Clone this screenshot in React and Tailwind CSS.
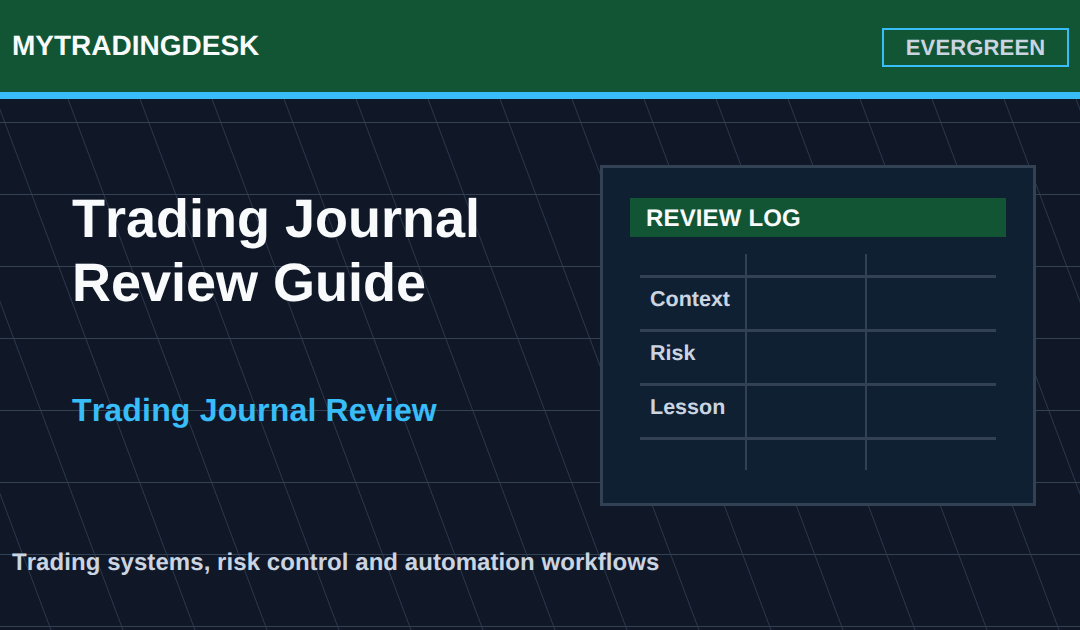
const rows = ['Context', 'Risk', 'Lesson'];

const GridLines = () => {
  const horizontals = [122, 194, 266, 338, 410, 482, 554, 626];
  const diagonals = [];
  for (let x = -220; x < 1152; x += 72) diagonals.push(x);
  return (
    <svg className="absolute inset-0" width="1080" height="630" viewBox="0 0 1080 630">
      {horizontals.map((y) => (
        <line key={y} x1="0" x2="1080" y1={y + 0.5} y2={y + 0.5} stroke="#334155" strokeWidth="1" />
      ))}
      {diagonals.map((x) => (
        <line key={x} x1={x} y1="99" x2={x + 199} y2="630" stroke="#334155" strokeWidth="0.8" />
      ))}
    </svg>
  );
};

export default function App() {
  return (
    <div className="relative w-[1080px] h-[630px] overflow-hidden bg-[#101828] font-['Liberation_Sans',Arial,sans-serif] [text-rendering:geometricPrecision] [font-kerning:none]">
      <GridLines />

      {/* Header */}
      <header className="relative h-[99px] bg-[#115535] border-b-[7px] border-[#38bdf8] flex items-center justify-between pl-3 pr-[11px]">
        <div className="text-[28px] leading-8 font-bold text-[#f8fafc]">MYTRADINGDESK</div>
        <div className="w-[187px] h-[39px] mt-[2px] border-2 border-[#38bdf8] flex items-center justify-center text-[22px] tracking-[0.15px] font-bold text-[#cbd5e1]">
          EVERGREEN
        </div>
      </header>

      {/* Main */}
      <main className="relative flex justify-between pl-[72px] pr-[44px] pt-[66px]">
        <div className="pt-[22px]">
          <h1 className="text-[54px] leading-[64px] font-bold text-[#f8fafc]">
            Trading Journal
            <br />
            Review Guide
          </h1>
          <p className="mt-[77px] text-[32px] leading-9 tracking-[0.18px] font-bold text-[#38bdf8]">Trading Journal Review</p>
        </div>

        <div className="w-[436px] h-[341px] border-[3px] border-[#334155] bg-[#102033] px-[27px] pt-[30px]">
          <div className="h-[39px] bg-[#115535] pl-4 pt-[3px] flex items-center text-[24px] tracking-[0.15px] font-bold text-[#f8fafc]">REVIEW LOG</div>
          <div className="relative mx-[10px] mt-[17px] h-[216px] pt-[21px]">
            <div className="absolute left-[105px] top-0 bottom-0 w-[2px] bg-[#334155]" />
            <div className="absolute left-[225px] top-0 bottom-0 w-[2px] bg-[#334155]" />
            {rows.map((row) => (
              <div key={row} className="h-[54px] border-t-[3px] border-[#334155] pl-[10px] pt-[6px] text-[21.5px] leading-[30px] font-bold text-[#cbd5e1]">
                {row}
              </div>
            ))}
            <div className="h-[3px] bg-[#334155]" />
          </div>
        </div>
      </main>

      {/* Footer tagline */}
      <p className="absolute left-3 top-[549px] text-[24px] leading-7 tracking-[0.06px] font-bold text-[#cbd5e1]">
        Trading systems, risk control and automation workflows
      </p>
    </div>
  );
}
